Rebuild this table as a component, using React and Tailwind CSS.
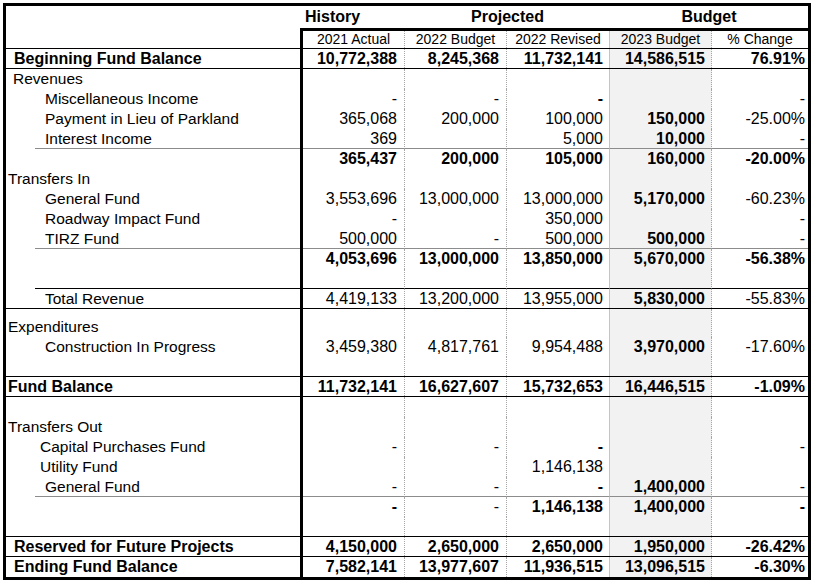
const cols = [
  { w: 'w-[102px]', pr: 'pr-[7px]', sep: 'border-r border-r-[#a6a6a6] [border-right-style:dotted]', bg: '' },
  { w: 'w-[102px]', pr: 'pr-[7px]', sep: 'border-r border-r-[#a6a6a6] [border-right-style:dotted]', bg: '' },
  { w: 'w-[103px]', pr: 'pr-[6px]', sep: 'border-r border-r-[#c4c4c4]', bg: '' },
  { w: 'w-[102px]', pr: 'pr-[6px]', sep: 'border-r border-r-[#a6a6a6] [border-right-style:dotted]', bg: 'bg-[#f2f2f2]' },
  { w: 'w-[96px]', pr: 'pr-[3px]', sep: '', bg: '' },
];

const rows = [
  { label: 'Beginning Fund Balance', ind: 'pl-[8px]', lb: true, vals: ['*10,772,388', '*8,245,368', '*11,732,141', '*14,586,515', '*76.91%'], line: 'full' },
  { label: 'Revenues', ind: 'pl-[7px]' },
  { label: 'Miscellaneous Income', ind: 'pl-[39px]', vals: ['-', '-', '*-', '', '-'] },
  { label: 'Payment in Lieu of Parkland', ind: 'pl-[39px]', vals: ['365,068', '200,000', '100,000', '*150,000', '-25.00%'] },
  { label: 'Interest Income', ind: 'pl-[10px]', vals: ['369', '', '5,000', '*10,000', '-'], line: 'gray' },
  { vals: ['*365,437', '*200,000', '*105,000', '*160,000', '*-20.00%'] },
  { label: 'Transfers In', ind: 'pl-[2px]' },
  { label: 'General Fund', ind: 'pl-[39px]', vals: ['3,553,696', '13,000,000', '13,000,000', '*5,170,000', '-60.23%'] },
  { label: 'Roadway Impact Fund', ind: 'pl-[39px]', vals: ['-', '', '350,000', '', '-'] },
  { label: 'TIRZ Fund', ind: 'pl-[10px]', vals: ['500,000', '-', '500,000', '*500,000', '-'], line: 'gray' },
  { vals: ['*4,053,696', '*13,000,000', '*13,850,000', '*5,670,000', '*-56.38%'] },
  { line: 'black' },
  { label: 'Total Revenue', ind: 'pl-[39px]', vals: ['4,419,133', '13,200,000', '13,955,000', '*5,830,000', '-55.83%'], line: 'full' },
  { label: 'Expenditures', ind: 'pl-[2px]', tall: true },
  { label: 'Construction In Progress', ind: 'pl-[39px]', vals: ['3,459,380', '4,817,761', '9,954,488', '*3,970,000', '-17.60%'] },
  { line: 'full' },
  { label: 'Fund Balance', ind: 'pl-[2px]', lb: true, vals: ['*11,732,141', '*16,627,607', '*15,732,653', '*16,446,515', '*-1.09%'], line: 'full' },
  {},
  { label: 'Transfers Out', ind: 'pl-[2px]' },
  { label: 'Capital Purchases Fund', ind: 'pl-[34px]', vals: ['-', '-', '*-', '', '-'] },
  { label: 'Utility Fund', ind: 'pl-[34px]', vals: ['', '', '1,146,138', '', ''] },
  { label: 'General Fund', ind: 'pl-[10px]', vals: ['-', '-', '*-', '*1,400,000', '-'], line: 'gray' },
  { vals: ['*-', '-', '*1,146,138', '*1,400,000', '*-'] },
  { line: 'full' },
  { label: 'Reserved for Future Projects', ind: 'pl-[8px]', lb: true, vals: ['*4,150,000', '*2,650,000', '*2,650,000', '*1,950,000', '*-26.42%'], line: 'full' },
  { label: 'Ending Fund Balance', ind: 'pl-[8px]', lb: true, vals: ['*7,582,141', '*13,977,607', '*11,936,515', '*13,096,515', '*-6.30%'] },
];

function Row({ r }) {
  const part = r.line === 'gray' || r.line === 'black';
  const partColor = r.line === 'gray' ? 'border-b border-b-[#8c8c8c]' : 'border-b border-b-black';
  const rowCls = `flex ${r.tall ? 'h-[28px]' : 'h-[20px]'} ${r.line === 'full' ? 'border-b border-b-black' : ''}`;
  const align = r.tall ? 'items-end pb-[1px]' : 'items-start';
  return (
    <div className={rowCls}>
      <div className={`w-[297px] shrink-0 flex border-r-[3px] border-r-black ${part ? 'pl-[29px]' : ''}`}>
        <div className={`flex-1 flex ${align} ${part ? partColor : ''} ${r.ind || ''}`}>
          {r.label && (
            <span className={`leading-[19px] whitespace-nowrap ${r.lb ? 'font-bold text-[16px]' : 'text-[15.5px]'}`}>
              {r.label}
            </span>
          )}
        </div>
      </div>
      {cols.map((c, i) => {
        const v = (r.vals && r.vals[i]) || '';
        const bold = v.startsWith('*');
        return (
          <div
            key={i}
            className={`${c.w} shrink-0 flex ${align} justify-end ${c.pr} ${c.sep} ${c.bg} ${part ? partColor : ''}`}
          >
            <span className={`leading-[19px] text-[16px] whitespace-nowrap ${bold ? 'font-bold' : ''}`}>
              {bold ? v.slice(1) : v}
            </span>
          </div>
        );
      })}
    </div>
  );
}

export default function App() {
  const heads = ['2021 Actual', '2022 Budget', '2022 Revised', '2023 Budget', '% Change'];
  return (
    <div className="w-[820px] h-[587px] bg-white pt-[3px] pl-[3px] font-['Liberation_Sans',Arial,sans-serif] text-black">
      <div className="w-[808px] border-[3px] border-black">
        {/* header row 1 */}
        <div className="flex h-[25px]">
          <div className="w-[294px] shrink-0" />
          <div className="w-[508px] shrink-0 flex border-b-[3px] border-b-black">
            <div className="w-[105px] pl-[5px] text-[16px] font-bold leading-[22px]">History</div>
            <div className="w-[205px] text-center text-[16px] font-bold leading-[22px]">Projected</div>
            <div className="w-[198px] text-center text-[16px] font-bold leading-[22px]">Budget</div>
          </div>
        </div>
        {/* header row 2 */}
        <div className="flex h-[18px] border-b border-b-black">
          <div className="w-[297px] shrink-0 border-r-[3px] border-r-black" />
          {cols.map((c, i) => (
            <div key={i} className={`${c.w} shrink-0 text-center text-[14px] leading-[17px] ${c.sep} ${c.bg}`}>
              {heads[i]}
            </div>
          ))}
        </div>
        {rows.map((r, i) => (
          <Row key={i} r={r} />
        ))}
      </div>
    </div>
  );
}
